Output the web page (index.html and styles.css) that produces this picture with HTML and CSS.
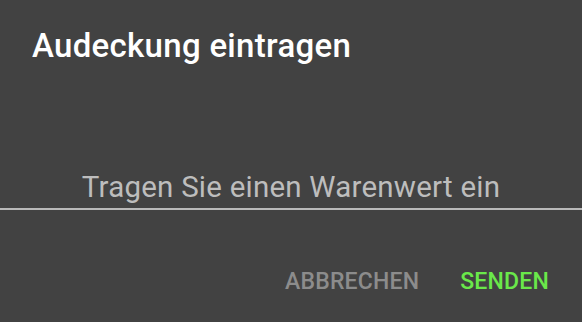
FILE: index.html
```html
<!DOCTYPE html>
<html lang="de">
<head>
<meta charset="utf-8">
<title>Audeckung eintragen</title>
<link rel="stylesheet" href="styles.css">
</head>
<body>
<div class="dialog">
  <h1 class="title">Audeckung eintragen</h1>
  <div class="field">
    <span class="hint">Tragen Sie einen Warenwert ein</span>
  </div>
  <div class="actions">
    <span class="btn btn-cancel">ABBRECHEN</span>
    <span class="btn btn-send">SENDEN</span>
  </div>
</div>
</body>
</html>
```
FILE: styles.css
```css
html, body {
  margin: 0;
  padding: 0;
  background: #424242;
  font-family: Roboto, "Noto Sans", sans-serif;
}
.dialog {
  width: 582px;
  height: 322px;
  display: flex;
  flex-direction: column;
}
.title {
  margin: 0;
  padding: 26px 0 0 32px;
  font-size: 33px;
  line-height: 40px;
  font-weight: 500;
  letter-spacing: 0.3px;
  color: #ffffff;
}
.field {
  margin-top: 103px;
  padding-bottom: 3px;
  border-bottom: 2px solid #b9b9b9;
  text-align: center;
}
.hint {
  display: block;
  font-size: 29.5px;
  line-height: 36px;
  letter-spacing: 0.22px;
  color: #bdbdbd;
}
.actions {
  margin-top: 58px;
  display: flex;
  justify-content: flex-end;
  gap: 41px;
  padding-right: 33px;
}
.btn {
  font-size: 23px;
  line-height: 28px;
  font-weight: 500;
  letter-spacing: 0.2px;
}
.btn-cancel {
  color: #8c8c8c;
}
.btn-send {
  color: #6ae84a;
}
```
